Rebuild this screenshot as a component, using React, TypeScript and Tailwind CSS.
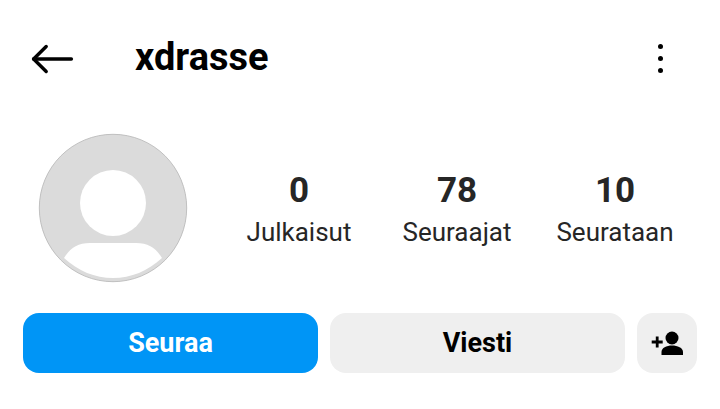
// Profile header — back bar, avatar with stats, follow/message actions.

const STATS: { value: string; label: string }[] = [
  { value: '0', label: 'Julkaisut' },
  { value: '78', label: 'Seuraajat' },
  { value: '10', label: 'Seurataan' },
];

function BackArrow() {
  return (
    <svg width="44" height="32" viewBox="0 0 44 32" fill="none" stroke="#000" strokeWidth="3.4" strokeLinecap="round" strokeLinejoin="round">
      <path d="M2.600 17H40.400" />
      <path d="M15.200 4.500L2.600 17L15.200 29.500" />
    </svg>
  );
}

function Avatar() {
  return (
    <svg width="150" height="150" viewBox="0 0 150 150" className="shrink-0">
      <circle cx="75" cy="75" r="73.7" fill="#dbdbdb" stroke="#b5b5b5" strokeWidth="0.8" />
      <circle cx="75" cy="70" r="33" fill="#fff" />
      <path d="M26 125 C32 115 40 110 52 110 H98 C110 110 118 115 124 125 C110 138 93 145 75 145 C57 145 40 138 26 125Z" fill="#fff" />
    </svg>
  );
}

function AddPerson() {
  return (
    <svg width="32" height="26" viewBox="0 0 32 26" fill="#000">
      <circle cx="21" cy="8" r="6.500" />
      <path d="M10.500 25 V22 C10.500 17.800 15.500 15.600 21 15.600 C26.500 15.600 32 17.800 32 22 V25Z" />
      <path d="M4.800 6.500 H7.600 V10.600 H11.700 V13.400 H7.600 V17.500 H4.800 V13.400 H0.700 V10.600 H4.800Z" />
    </svg>
  );
}

export default function App() {
  return (
    <div className="h-[409px] w-[720px] overflow-hidden bg-white font-['Roboto',sans-serif]">
      {/* Top bar */}
      <header className="mt-[29px] flex h-[58px] items-center pr-[57px] pl-[31px]">
        <BackArrow />
        <h1 className="ml-[60px] pb-[2px] text-[38px] leading-none font-bold text-black">xdrasse</h1>
        <div className="ml-auto flex flex-col gap-[7px]">
          <span className="h-[5px] w-[5px] rounded-full bg-black" />
          <span className="h-[5px] w-[5px] rounded-full bg-black" />
          <span className="h-[5px] w-[5px] rounded-full bg-black" />
        </div>
      </header>

      {/* Avatar + stats */}
      <section className="mt-[46px] flex items-center pl-[38px]">
        <Avatar />
        <div className="ml-[32px] grid w-[474px] grid-cols-3">
          {STATS.map((s) => (
            <div key={s.label} className="flex flex-col items-center">
              <span className="text-[35px] leading-[44px] font-bold text-[#262626]">{s.value}</span>
              <span className="mt-[3px] text-[26px] leading-[32px] whitespace-nowrap text-[#262626]">{s.label}</span>
            </div>
          ))}
        </div>
      </section>

      {/* Actions */}
      <div className="mt-[30px] flex gap-3 pl-[23px]">
        <button type="button" className="h-[60px] w-[295px] rounded-[16px] bg-[#0095f6] text-[27px] font-bold text-white">
          Seuraa
        </button>
        <button type="button" className="h-[60px] w-[295px] rounded-[16px] bg-[#efefef] text-[27px] font-bold text-black">
          Viesti
        </button>
        <button type="button" className="flex h-[60px] w-[60px] items-center justify-center rounded-[16px] bg-[#efefef]">
          <AddPerson />
        </button>
      </div>
    </div>
  );
}
